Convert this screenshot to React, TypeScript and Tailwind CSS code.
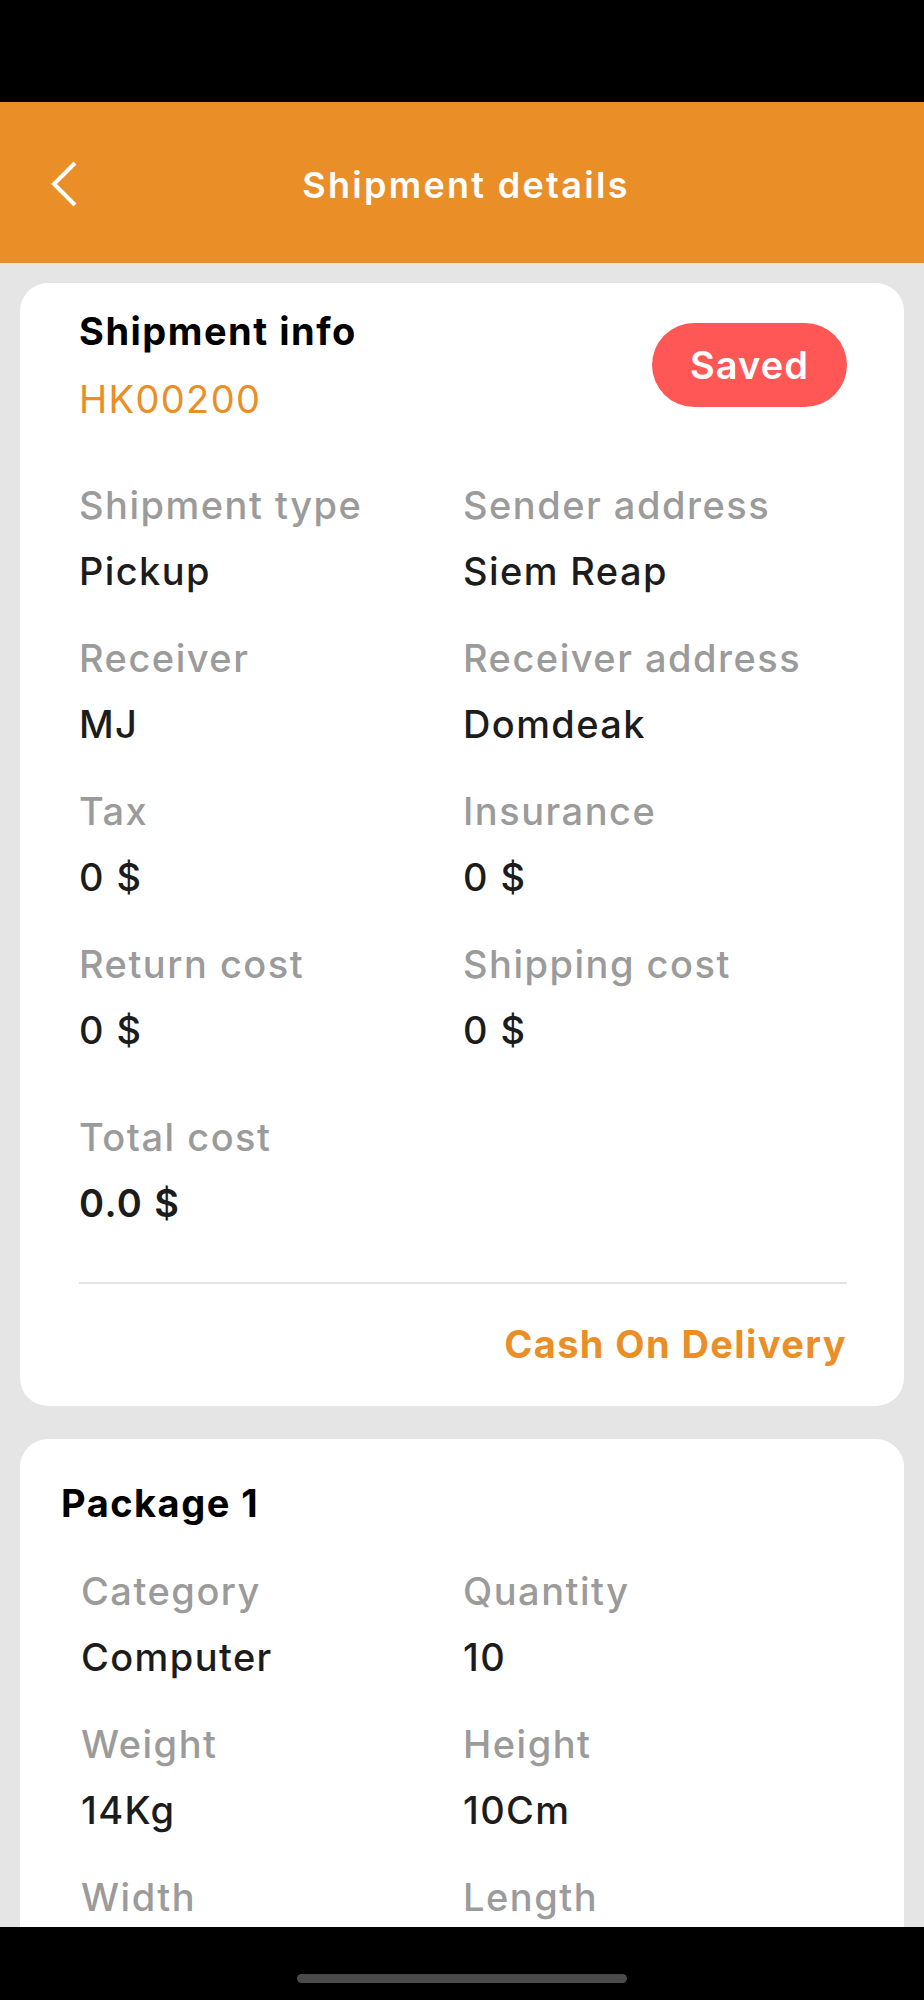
import React from "react";

const font = { fontFamily: "Inter, 'Noto Sans', sans-serif" };

function Field({ label, value, bold }: { label: string; value?: string; bold?: boolean }) {
  return (
    <div className="flex flex-col">
      <div className="text-[38px] leading-[44px] font-medium text-[#9b9b9b] tracking-[1.5px]">{label}</div>
      {value !== undefined && (
        <div className={`mt-[22px] text-[38px] leading-[44px] text-[#1c1c1c] tracking-[1.4px] ${bold ? "font-semibold" : "font-medium"}`}>{value}</div>
      )}
    </div>
  );
}

export default function App() {
  return (
    <div className="w-[924px] h-[2000px] flex flex-col bg-[#e5e5e5] overflow-hidden" style={font}>
      <div className="h-[102px] bg-black shrink-0" />
      <div className="h-[161px] bg-[#ea8e27] shrink-0 grid grid-cols-[1fr_auto_1fr] items-center px-[50px]">
        <div className="flex items-center">
          <svg width="28" height="46" viewBox="0 0 28 46" className="mt-[2px]">
            <polyline points="25,2 4,23 25,44" fill="none" stroke="white" strokeWidth="4" />
          </svg>
        </div>
        <div className="text-white text-[36px] leading-[44px] font-semibold tracking-[2.3px] pt-[4px] ml-[8px]">Shipment details</div>
        <div />
      </div>
      <div className="flex-1 overflow-hidden px-5 pt-5 flex flex-col gap-[33px]">
        <div className="bg-white rounded-[28px] pl-[59px] pr-[57px] pt-[26px] pb-[40px] shrink-0">
          <div className="flex items-center justify-between">
            <div className="flex flex-col">
              <div className="text-[38px] leading-[44px] font-bold text-black tracking-[1.5px]">Shipment info</div>
              <div className="mt-[24px] text-[38px] leading-[44px] font-normal text-[#ea8e27] tracking-[1.35px]">HK00200</div>
            </div>
            <div className="h-[84px] w-[195px] rounded-full bg-[#ff5656] flex items-center justify-center text-white text-[38px] font-semibold tracking-[1.1px]">Saved</div>
          </div>
          <div className="mt-[62px] grid grid-cols-[384px_1fr] gap-y-[43px]">
            <Field label="Shipment type" value="Pickup" />
            <Field label="Sender address" value="Siem Reap" />
            <Field label="Receiver" value="MJ" />
            <Field label="Receiver address" value="Domdeak" />
            <Field label="Tax" value="0 $" />
            <Field label="Insurance" value="0 $" />
            <Field label="Return cost" value="0 $" />
            <Field label="Shipping cost" value="0 $" />
          </div>
          <div className="mt-[63px]">
            <Field label="Total cost" value="0.0 $" bold />
          </div>
          <div className="mt-[57px] h-[2px] bg-[#e3e3e3]" />
          <div className="mt-[38px] text-right text-[38px] leading-[44px] font-bold text-[#ea8e27] tracking-[1.4px]">Cash On Delivery</div>
        </div>
        <div className="bg-white rounded-t-[28px] pl-[41px] pt-[42px] pb-[40px] shrink-0">
          <div className="text-[38px] leading-[44px] font-bold text-black tracking-[1.5px]">Package 1</div>
          <div className="mt-[44px] pl-[20px] grid grid-cols-[382px_1fr] gap-y-[43px]">
            <Field label="Category" value="Computer" />
            <Field label="Quantity" value="10" />
            <Field label="Weight" value="14Kg" />
            <Field label="Height" value="10Cm" />
            <Field label="Width" />
            <Field label="Length" />
          </div>
        </div>
      </div>
      <div className="h-[73px] bg-black shrink-0 flex items-end justify-center pb-[17px]">
        <div className="w-[330px] h-[9px] rounded-full bg-[#4b4b4b]" />
      </div>
    </div>
  );
}
